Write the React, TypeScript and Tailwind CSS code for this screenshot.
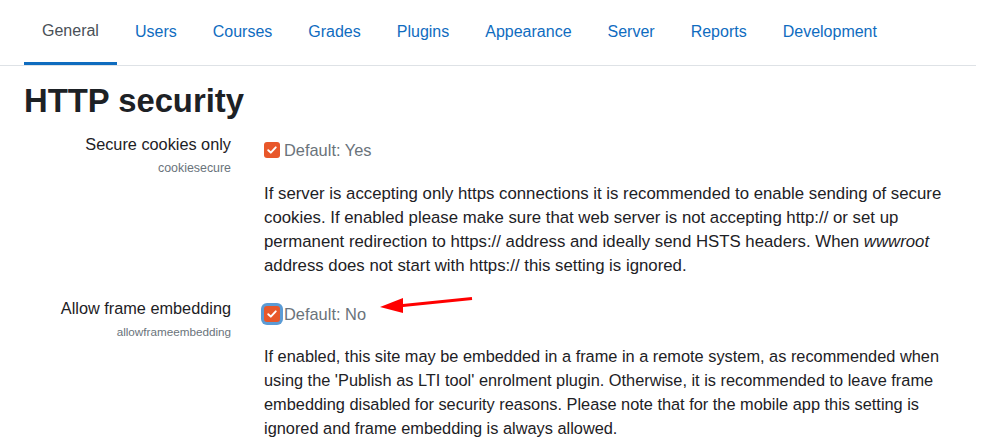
const tabs = [
  'General',
  'Users',
  'Courses',
  'Grades',
  'Plugins',
  'Appearance',
  'Server',
  'Reports',
  'Development',
];

function Checkbox({ focused }: { focused?: boolean }) {
  return (
    <span
      className={
        'flex h-4 w-4 shrink-0 items-center justify-center rounded-[3px] bg-[#e8572a] ' +
        (focused ? 'ring-[3px] ring-[#5b9bd5]' : '')
      }
    >
      <svg viewBox="0 0 16 16" className="h-3 w-3" fill="none">
        <path
          d="M3 8.3 6.4 11.5 13 4.5"
          stroke="#fff"
          strokeWidth="2.6"
          strokeLinecap="round"
          strokeLinejoin="round"
        />
      </svg>
    </span>
  );
}

function Setting({
  label,
  name,
  nameClass,
  defaultText,
  focused,
  descClass,
  children,
}: {
  label: string;
  name: string;
  nameClass: string;
  defaultText: string;
  focused?: boolean;
  descClass: string;
  children: React.ReactNode;
}) {
  return (
    <div className="flex">
      <div className="w-[207px] shrink-0 text-right">
        <div className="text-[16.3px] leading-6 text-[#1d2125]">{label}</div>
        <div className={'mt-[3px] leading-[18px] text-[#6a737b] ' + nameClass}>{name}</div>
      </div>
      <div className="ml-[33px] w-[700px] pt-[6px]">
        <div className="flex items-center gap-1 text-[16.4px] leading-6 text-[#6a737b]">
          <Checkbox focused={focused} />
          <span>{defaultText}</span>
        </div>
        <p className={'leading-6 text-[#1d2125] ' + descClass}>{children}</p>
      </div>
    </div>
  );
}

export default function App() {
  return (
    <div className="relative w-[976px] bg-white font-['Liberation_Sans',Arial,sans-serif]">
      <nav className="flex border-b border-[#dee2e6] pl-6">
        {tabs.map((tab, i) => (
          <a
            key={tab}
            className={
              'flex h-[65px] items-center px-[18px] pb-[2px] text-[16px] ' +
              (i === 0
                ? 'border-b-[3px] border-[#0f6cbf] pt-px text-[#495057]'
                : 'text-[#0f6cbf]')
            }
          >
            {tab}
          </a>
        ))}
      </nav>

      <main className="px-6 pt-[17px]">
        <h2 className="text-[32.8px] font-bold leading-9 text-[#1d2125]">HTTP security</h2>

        <div className="mt-[13px] flex flex-col gap-[18px]">
          <Setting
            label="Secure cookies only"
            name="cookiesecure"
            nameClass="text-[12.4px]"
            defaultText="Default: Yes"
            descClass="mt-[20px] text-[16.8px]"
          >
            If server is accepting only https connections it is recommended to enable sending of
            secure cookies. If enabled please make sure that web server is not accepting http:// or
            set up permanent redirection to https:// address and ideally send HSTS headers. When{' '}
            <em>wwwroot</em> address does not start with https:// this setting is ignored.
          </Setting>
          <Setting
            label="Allow frame embedding"
            name="allowframeembedding"
            nameClass="text-[11.7px]"
            defaultText="Default: No"
            descClass="mt-[18px] text-[16.35px]"
            focused
          >
            If enabled, this site may be embedded in a frame in a remote system, as recommended when
            using the 'Publish as LTI tool' enrolment plugin. Otherwise, it is recommended to leave
            frame embedding disabled for security reasons. Please note that for the mobile app this
            setting is ignored and frame embedding is always allowed.
          </Setting>
        </div>
      </main>

      {/* red annotation arrow */}
      <svg className="pointer-events-none absolute left-[376px] top-[292px]" width="100" height="24">
        <line x1="96" y1="6.5" x2="22" y2="14" stroke="#ff0000" strokeWidth="3" />
        <polygon points="4,15 27,6 27,21" fill="#ff0000" />
      </svg>
    </div>
  );
}
